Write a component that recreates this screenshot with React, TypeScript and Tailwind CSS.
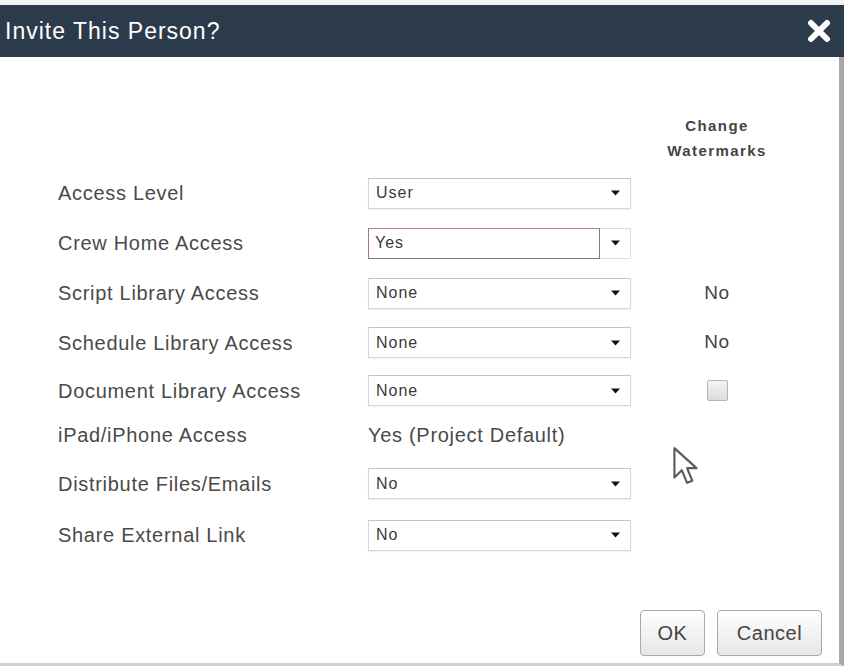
import React from "react";

type Row = {
  label: string;
  value: string;
  kind: "select" | "focus" | "text";
  extra?: "no" | "check";
  h: string;
};

const rows: Row[] = [
  { label: "Access Level", value: "User", kind: "select", h: "h-[50px]" },
  { label: "Crew Home Access", value: "Yes", kind: "focus", h: "h-[50px]" },
  { label: "Script Library Access", value: "None", kind: "select", extra: "no", h: "h-[50px]" },
  { label: "Schedule Library Access", value: "None", kind: "select", extra: "no", h: "h-[49px]" },
  { label: "Document Library Access", value: "None", kind: "select", extra: "check", h: "h-[47px]" },
  { label: "iPad/iPhone Access", value: "Yes (Project Default)", kind: "text", h: "h-[42px]" },
  { label: "Distribute Files/Emails", value: "No", kind: "select", h: "h-[55px]" },
  { label: "Share External Link", value: "No", kind: "select", h: "h-[48px]" },
];

function Caret() {
  return (
    <svg width="9" height="6" viewBox="0 0 9 6" className="shrink-0">
      <path d="M0 0.5 L9 0.5 L4.5 5.5 Z" fill="#111" />
    </svg>
  );
}

function Select({ value }: { value: string }) {
  return (
    <div className="flex h-[31px] w-[263px] items-center justify-between border border-[#d6d6d6] border-t-[#c4c4c4] bg-white pl-[7px] pr-[10px] shadow-[0_1px_1px_rgba(0,0,0,0.05)]">
      <span className="text-[16px] tracking-[1px] text-[#3a3a3a]">{value}</span>
      <Caret />
    </div>
  );
}

function FocusSelect({ value }: { value: string }) {
  return (
    <div className="flex h-[31px] w-[263px] items-center">
      <div className="flex h-[31px] w-[232px] items-center border border-[#7c7c7c] border-t-[#b88080] border-l-[#a87777] bg-white pl-[6px]">
        <span className="text-[16px] tracking-[1px] text-[#3a3a3a]">{value}</span>
      </div>
      <div className="flex h-[31px] flex-1 items-center justify-center border border-l-0 border-[#dcdcdc] bg-white">
        <Caret />
      </div>
    </div>
  );
}

function Cursor() {
  return (
    <svg width="28" height="40" viewBox="0 0 26 38" className="absolute left-[672px] top-[446px]">
      <path
        d="M2 2 L2 30 L9 23 L14 35 L19 33 L14 21 L23 21 Z"
        fill="#fff"
        stroke="#5a5a5a"
        strokeWidth="2"
        strokeLinejoin="round"
      />
    </svg>
  );
}

export default function App() {
  return (
    <div className="relative flex h-[666px] w-[844px] flex-col bg-white font-['Liberation_Sans',Arial,sans-serif]">
      <div className="h-[5px] bg-[#f3f3f3]" />
      <div className="flex h-[52px] items-center justify-between bg-[#2c3b4b] pl-[5px] pr-[13px]">
        <span className="text-[23px] tracking-[1px] text-white">Invite This Person?</span>
        <svg width="24" height="24" viewBox="0 0 24 24">
          <path d="M4 4 L20 20 M20 4 L4 20" stroke="#fff" strokeWidth="6" strokeLinecap="round" />
        </svg>
      </div>

      <div className="flex flex-1 flex-col border-r-[5px] border-b-[3px] border-[#a9a9a9] border-b-[#cfcfcf]">
        <div className="flex h-[111px] pl-[632px] pt-[56px]">
          <div className="w-[170px] text-center text-[15px] font-bold leading-[25px] tracking-[1.4px] text-[#444]">
            Change
            <br />
            Watermarks
          </div>
        </div>

        {rows.map((r) => (
          <div key={r.label} className={`flex items-center pl-[58px] ${r.h}`}>
            <div className="w-[310px] text-[20px] tracking-[0.7px] text-[#4a4a4a]">{r.label}</div>
            <div className="w-[264px]">
              {r.kind === "select" && <Select value={r.value} />}
              {r.kind === "focus" && <FocusSelect value={r.value} />}
              {r.kind === "text" && (
                <span className="text-[20px] tracking-[0.7px] text-[#4a4a4a]">{r.value}</span>
              )}
            </div>
            <div className="flex w-[170px] justify-center">
              {r.extra === "no" && <span className="text-[19px] tracking-[0.5px] text-[#444]">No</span>}
              {r.extra === "check" && (
                <div className="h-[21px] w-[21px] rounded-[2px] border border-[#b5b5b5] bg-gradient-to-b from-[#f4f4f4] to-[#dcdcdc]" />
              )}
            </div>
          </div>
        ))}

        <div className="mt-auto flex justify-end gap-[12px] pb-[7px] pr-[17px]">
          <button className="h-[46px] w-[65px] rounded-[4px] border border-[#a8a8a8] bg-gradient-to-b from-white to-[#e6e6e6] text-[20px] tracking-[0.5px] text-[#444]">
            OK
          </button>
          <button className="h-[46px] w-[105px] rounded-[4px] border border-[#a8a8a8] bg-gradient-to-b from-white to-[#e6e6e6] text-[20px] tracking-[0.5px] text-[#444]">
            Cancel
          </button>
        </div>
      </div>

      <Cursor />
    </div>
  );
}
